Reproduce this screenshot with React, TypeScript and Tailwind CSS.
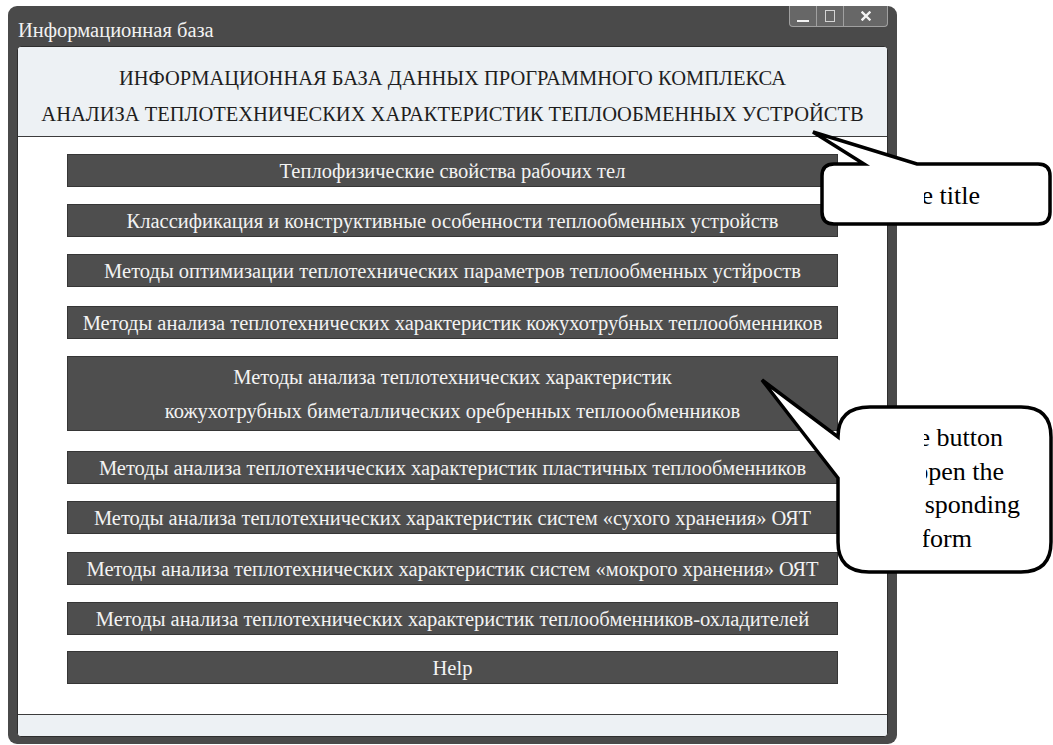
import React from "react";

type Item = { label: string[]; cls: string };

const items: Item[] = [
  { label: ["Теплофизические свойства рабочих тел"], cls: "h-[33px]" },
  { label: ["Классификация и конструктивные особенности теплообменных устройств"], cls: "mt-[17px] h-[33px]" },
  { label: ["Методы оптимизации теплотехнических параметров теплообменных устйроств"], cls: "mt-[17px] h-[33px]" },
  { label: ["Методы анализа теплотехнических характеристик кожухотрубных теплообменников"], cls: "mt-[19px] h-[33px]" },
  {
    label: [
      "Методы анализа теплотехнических характеристик",
      "кожухотрубных биметаллических оребренных теплоообменников",
    ],
    cls: "mt-[17px] h-[75px]",
  },
  { label: ["Методы анализа теплотехнических характеристик пластичных теплообменников"], cls: "mt-[20px] h-[33px]" },
  { label: ["Методы анализа теплотехнических характеристик систем «сухого хранения» ОЯТ"], cls: "mt-[17px] h-[33px]" },
  { label: ["Методы анализа теплотехнических характеристик систем «мокрого хранения» ОЯТ"], cls: "mt-[18px] h-[33px]" },
  { label: ["Методы анализа теплотехнических характеристик теплообменников-охладителей"], cls: "mt-[17px] h-[33px]" },
  { label: ["Help"], cls: "mt-[16px] h-[33px]" },
];

function WindowControls() {
  return (
    <div className="mr-[9px] flex h-[21px] overflow-hidden rounded-b-[4px] border border-t-0 border-[#a0a0a0] bg-[#676767]">
      <div className="flex w-[27px] items-end justify-center border-r border-[#a0a0a0] pb-[4px]">
        <div className="h-[2px] w-[12px] bg-[#f2f2f2]" />
      </div>
      <div className="flex w-[27px] items-center justify-center border-r border-[#a0a0a0]">
        <div className="h-[12px] w-[10px] border border-[#d4d4d4]" />
      </div>
      <div className="flex w-[43px] items-center justify-center">
        <svg width="10" height="10" viewBox="0 0 10 10">
          <path d="M1.5 1.5 L8.5 8.5 M8.5 1.5 L1.5 8.5" stroke="#f4f4f4" strokeWidth="2.4" strokeLinecap="square" />
        </svg>
      </div>
    </div>
  );
}

function MenuButton({ item }: { item: Item }) {
  return (
    <div
      className={`flex w-[771px] flex-col items-center justify-center border border-[#363636] bg-[#4e4e4e] text-[20.5px] text-[#f3f3f3] ${item.cls}`}
    >
      {item.label.map((l) => (
        <div key={l} className="whitespace-nowrap leading-[34px]">
          {l}
        </div>
      ))}
    </div>
  );
}

// One line of callout text; the text is pinned to its right end and clipped on the left.
function CalloutLine({ text, width, indent }: { text: string; width: number; indent: number }) {
  return (
    <div className="flex justify-end overflow-hidden whitespace-nowrap" style={{ width, marginLeft: indent }}>
      <span className="shrink-0">{text}</span>
    </div>
  );
}

export default function App() {
  return (
    <div className="relative h-[745px] w-[1053px] overflow-hidden bg-white font-['Liberation_Serif','Times_New_Roman',serif]">
      <div className="pl-[8px] pt-[6px]">
        <div className="flex h-[738px] w-[889px] flex-col rounded-[9px] bg-[#4a4a4a]">
          {/* title bar */}
          <div className="flex h-[40px] items-start justify-between">
            <div className="pl-[10px] pt-[12px] text-[20.5px] leading-[24px] text-[#f2f2f2]">Информационная база</div>
            <WindowControls />
          </div>

          {/* client area */}
          <div className="mx-[9px] mb-[7px] flex flex-1 flex-col overflow-hidden rounded-[4px] border border-[#2e2e2e] bg-white">
            <div className="flex h-[90px] flex-col items-center border-b border-[#3c3c3c] bg-[#edf1f4] pt-[13px] text-[20.5px] leading-[36px] text-[#1e1e1e]">
              <div className="whitespace-nowrap">ИНФОРМАЦИОННАЯ БАЗА ДАННЫХ ПРОГРАММНОГО КОМПЛЕКСА</div>
              <div className="whitespace-nowrap">
                АНАЛИЗА ТЕПЛОТЕХНИЧЕСКИХ ХАРАКТЕРИСТИК ТЕПЛООБМЕННЫХ УСТРОЙСТВ
              </div>
            </div>

            <div className="flex flex-1 flex-col pl-[49px] pt-[17px]">
              {items.map((it) => (
                <MenuButton key={it.label.join(" ")} item={it} />
              ))}
            </div>

            <div className="h-[22px] border-t border-[#3c3c3c] bg-[#edf1f4]" />
          </div>
        </div>
      </div>

      {/* speech callouts */}
      <svg className="pointer-events-none absolute left-0 top-0" width="1053" height="745" viewBox="0 0 1053 745">
        <path
          d="M834 164 L864 164 L813 132 L917 164 L1038 164 Q1050 164 1050 176 L1050 212 Q1050 224 1038 224 L834 224 Q822 224 822 212 L822 176 Q822 164 834 164 Z"
          fill="#ffffff"
          stroke="#000000"
          strokeWidth="3.5"
          strokeLinejoin="miter"
        />
        <path
          d="M870 407 L1021 407 Q1051 407 1051 437 L1051 542 Q1051 572 1021 572 L869 572 Q838 572 838 542 L838 478 L762 380 L838 437 Q838 407 870 407 Z"
          fill="#ffffff"
          stroke="#000000"
          strokeWidth="3.5"
          strokeLinejoin="miter"
        />
      </svg>

      <div className="absolute left-[918px] top-[179px] text-[26px] leading-[33px] text-black">
        <CalloutLine text="Here is the title" width={56} indent={6} />
      </div>
      <div className="absolute left-[918px] top-[421px] text-[26px] leading-[33.5px] text-black">
        <CalloutLine text="Pressing the button" width={79} indent={6} />
        <CalloutLine text="will open the" width={78} indent={8} />
        <CalloutLine text="corresponding" width={96} indent={6} />
        <CalloutLine text="form" width={49} indent={5} />
      </div>
    </div>
  );
}
